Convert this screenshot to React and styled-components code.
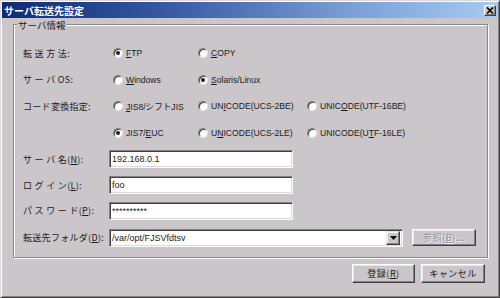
import React from "react";
import styled, { createGlobalStyle } from "styled-components";

const GlobalStyle = createGlobalStyle`
  body {
    margin: 0;
    background: #cac6ca;
    font-family: "Liberation Sans", "Noto Sans CJK JP", sans-serif;
  }
`;

const Window = styled.div`
  width: 500px;
  height: 298px;
  box-sizing: border-box;
  background: #cac6ca;
  border: 1px solid;
  border-color: #dcd8dc #404040 #404040 #dcd8dc;
  box-shadow: inset 1px 1px 0 #ffffff, inset -1px -1px 0 #848084;
  padding: 1px;
  display: flex;
  flex-direction: column;
  color: #1c1c1c;
  font-size: 9px;
`;

const TitleBar = styled.div`
  height: 16px;
  display: flex;
  align-items: center;
  justify-content: space-between;
  padding: 0 2px 0 2px;
  background: linear-gradient(to right, #0e2a74 0%, #3a5ca4 35%, #7a9ed6 70%, #a8cbf2 100%);
`;

const TitleText = styled.span`
  color: #ffffff;
  font-family: "Noto Sans CJK JP", sans-serif;
  font-weight: bold;
  font-size: 10px;
`;

const CloseButton = styled.span`
  width: 12px;
  height: 11px;
  box-sizing: border-box;
  display: flex;
  align-items: center;
  justify-content: center;
  background: #cac6ca;
  border: 1px solid;
  border-color: #ffffff #404040 #404040 #ffffff;
  box-shadow: inset -1px -1px 0 #848084;
`;

const Content = styled.div`
  padding: 6px 10px 0 11px;
  display: flex;
  flex-direction: column;
`;

const Group = styled.div`
  position: relative;
  height: 234px;
  box-sizing: border-box;
  border: 1px solid #8a868a;
  box-shadow: inset 1px 1px 0 #ffffff, 1px 1px 0 #ffffff;
  padding: 15px 0 0 9px;
  display: flex;
  flex-direction: column;
`;

const Legend = styled.span`
  position: absolute;
  top: -6px;
  left: 3px;
  padding: 0 1px;
  background: #cac6ca;
  font-family: "Noto Sans CJK JP", sans-serif;
  font-size: 9.5px;
  line-height: 12px;
`;

const Row = styled.div`
  height: ${(p) => p.$h}px;
  display: grid;
  grid-template-columns: 86px 1fr;
  align-items: center;
`;

const Label = styled.span`
  font-family: "Noto Sans CJK JP", sans-serif;
  font-size: 9px;
  letter-spacing: 0.3px;
  white-space: nowrap;
`;

const Options = styled.div`
  display: flex;
  align-items: center;
  padding-left: 4px;
`;

const Option = styled.label`
  width: ${(p) => (p.$w ? `${p.$w}px` : "auto")};
  display: flex;
  align-items: center;
  gap: 3px;
  font-size: 8.6px;
  white-space: nowrap;
`;

const Radio = styled.span`
  width: 10px;
  height: 10px;
  box-sizing: border-box;
  border-radius: 50%;
  background: #ffffff;
  border: 1px solid;
  border-color: #848084 #e8e4e8 #e8e4e8 #848084;
  box-shadow: inset 1px 1px 0 #404040;
  display: flex;
  align-items: center;
  justify-content: center;

  &::after {
    content: "";
    width: 4px;
    height: 4px;
    border-radius: 50%;
    background: ${(p) => (p.$checked ? "#1c1c1c" : "transparent")};
  }
`;

const Key = styled.span`
  text-decoration: underline;
  text-underline-offset: 1px;
`;

const Field = styled.div`
  width: ${(p) => p.$w}px;
  height: 18px;
  box-sizing: border-box;
  background: #ffffff;
  border: 1px solid;
  border-color: #848084 #ffffff #ffffff #848084;
  box-shadow: inset 1px 1px 0 #404040, inset -1px -1px 0 #dcd8dc;
  display: flex;
  align-items: center;
  padding-left: 2px;
  font-size: 9px;
`;

const FieldRow = styled.div`
  display: flex;
  align-items: center;
  gap: 9px;
`;

const Combo = styled(Field)`
  justify-content: space-between;
  padding-right: 2px;
`;

const DropButton = styled.span`
  width: 14px;
  height: 14px;
  box-sizing: border-box;
  background: #cac6ca;
  border: 1px solid;
  border-color: #e8e4e8 #404040 #404040 #e8e4e8;
  box-shadow: inset -1px -1px 0 #848084, inset 1px 1px 0 #ffffff;
  display: flex;
  align-items: center;
  justify-content: center;
`;

const Button = styled.button`
  width: ${(p) => p.$w}px;
  height: ${(p) => p.$h || 19}px;
  box-sizing: border-box;
  padding: 0;
  background: #cac6ca;
  border: 1px solid;
  border-color: #ffffff #404040 #404040 #ffffff;
  box-shadow: inset -1px -1px 0 #848084, inset 1px 1px 0 #e8e4e8;
  font-family: "Noto Sans CJK JP", sans-serif;
  font-size: 9px;
  letter-spacing: 0.5px;
  color: ${(p) => (p.disabled ? "#8e8a8e" : "#1c1c1c")};
  text-shadow: ${(p) => (p.disabled ? "1px 1px 0 #ffffff" : "none")};
`;

const Footer = styled.div`
  display: flex;
  justify-content: flex-end;
  gap: 6px;
  padding: 6px 3px 0 0;
`;

const RadioOption = ({ checked, w, children }) => (
  <Option $w={w}>
    <Radio $checked={checked} />
    <span>{children}</span>
  </Option>
);

export default function App() {
  return (
    <>
      <GlobalStyle />
      <Window>
        <TitleBar>
          <TitleText>サーバ転送先設定</TitleText>
          <CloseButton>
            <svg width="8" height="7" viewBox="0 0 8 7">
              <path d="M1 0.5 L7 6.5 M7 0.5 L1 6.5" stroke="#000" strokeWidth="1.6" />
            </svg>
          </CloseButton>
        </TitleBar>
        <Content>
          <Group>
            <Legend>サーバ情報</Legend>
            <Row $h={26}>
              <Label>転 送 方 法:</Label>
              <Options>
                <RadioOption checked w={85}><Key>F</Key>TP</RadioOption>
                <RadioOption><Key>C</Key>OPY</RadioOption>
              </Options>
            </Row>
            <Row $h={27}>
              <Label>サ ー バ OS:</Label>
              <Options>
                <RadioOption w={85}><Key>W</Key>indows</RadioOption>
                <RadioOption checked><Key>S</Key>olaris/Linux</RadioOption>
              </Options>
            </Row>
            <Row $h={26}>
              <Label>コード変換指定:</Label>
              <Options>
                <RadioOption w={85}><Key>J</Key>IS8/シフトJIS</RadioOption>
                <RadioOption w={109}>UN<Key>I</Key>CODE(UCS-2BE)</RadioOption>
                <RadioOption>UNIC<Key>O</Key>DE(UTF-16BE)</RadioOption>
              </Options>
            </Row>
            <Row $h={27}>
              <span />
              <Options>
                <RadioOption checked w={85}>JIS7/<Key>E</Key>UC</RadioOption>
                <RadioOption w={109}>U<Key>N</Key>ICODE(UCS-2LE)</RadioOption>
                <RadioOption>UNICODE(U<Key>T</Key>F-16LE)</RadioOption>
              </Options>
            </Row>
            <Row $h={26}>
              <Label>サ ー バ 名(<Key>N</Key>):</Label>
              <Field $w={184}>192.168.0.1</Field>
            </Row>
            <Row $h={26}>
              <Label>ロ グ イ ン(<Key>L</Key>):</Label>
              <Field $w={184}>foo</Field>
            </Row>
            <Row $h={25}>
              <Label>パ ス ワ ー ド(<Key>P</Key>):</Label>
              <Field $w={184}>**********</Field>
            </Row>
            <Row $h={29}>
              <Label>転送先フォルダ(<Key>D</Key>):</Label>
              <FieldRow>
                <Combo $w={294}>
                  <span>/var/opt/FJSVfdtsv</span>
                  <DropButton>
                    <svg width="7" height="4" viewBox="0 0 7 4">
                      <path d="M0 0 H7 L3.5 4 Z" fill="#000" />
                    </svg>
                  </DropButton>
                </Combo>
                <Button $w={64} $h={17} disabled>
                  参照(<Key>B</Key>)...
                </Button>
              </FieldRow>
            </Row>
          </Group>
          <Footer>
            <Button $w={63}>登録(<Key>R</Key>)</Button>
            <Button $w={64}>キャンセル</Button>
          </Footer>
        </Content>
      </Window>
    </>
  );
}
